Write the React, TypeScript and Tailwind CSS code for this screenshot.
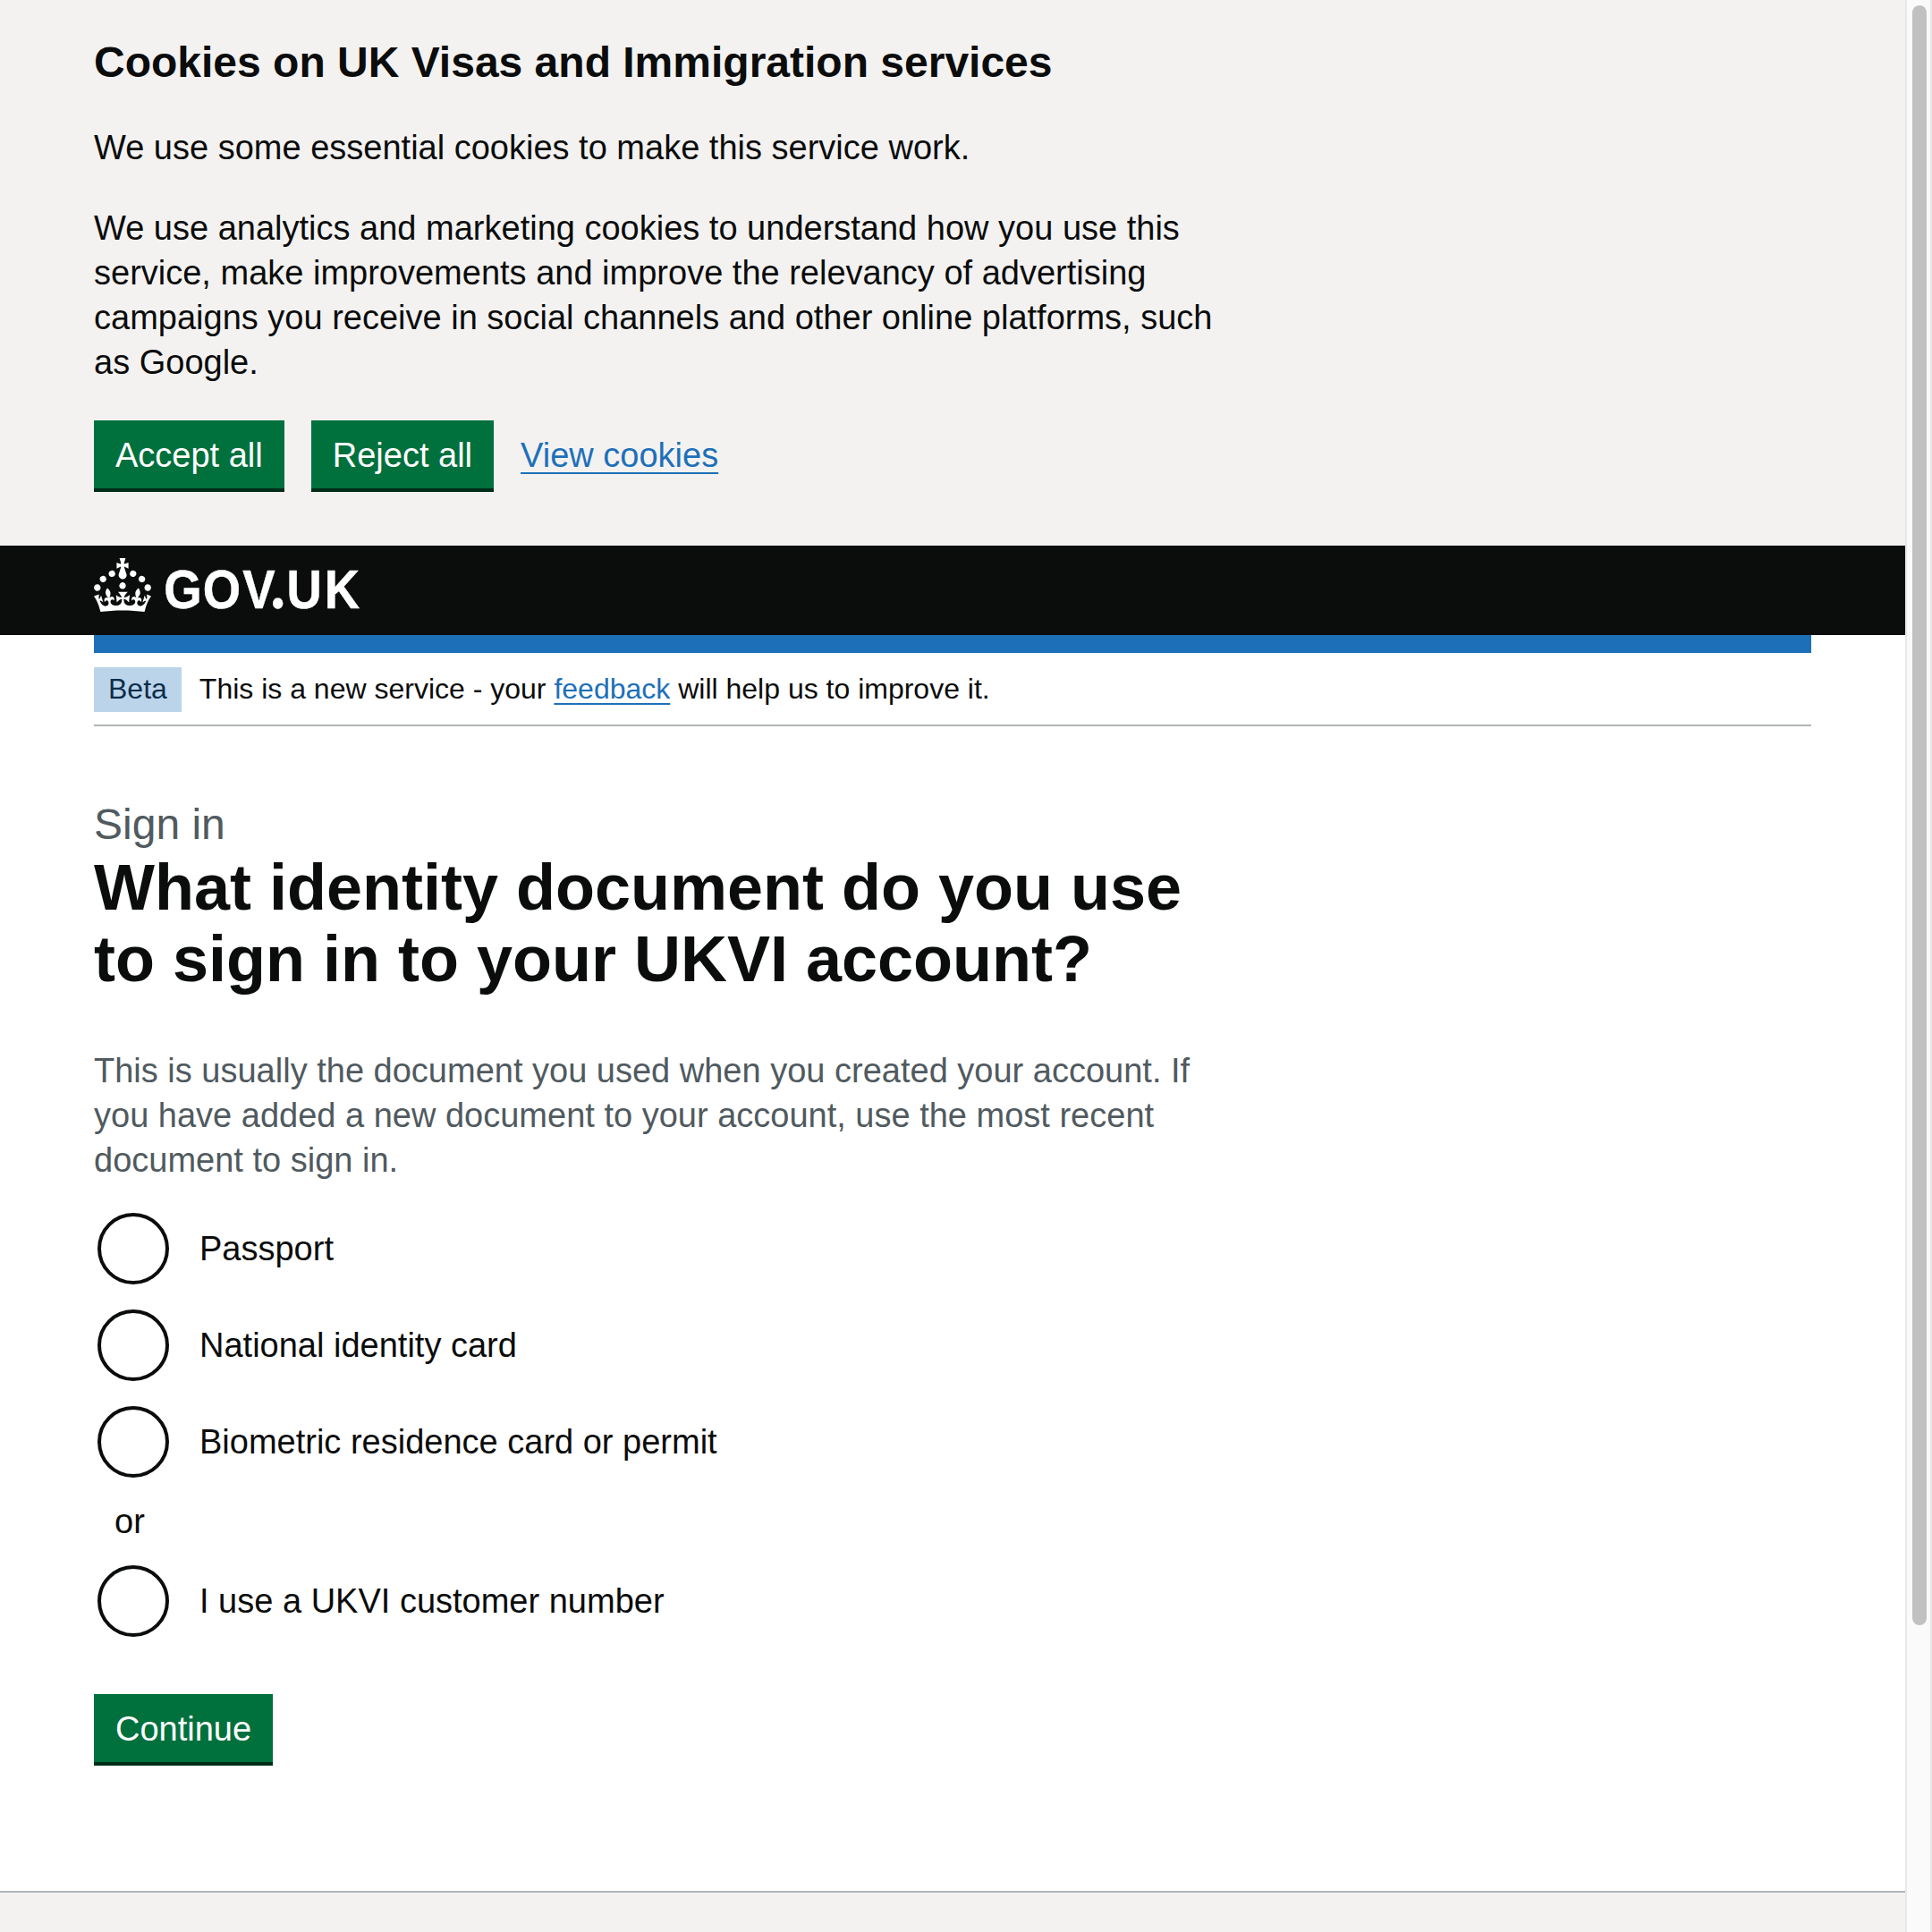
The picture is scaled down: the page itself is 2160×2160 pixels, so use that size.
import React from "react";

const CROWN =
  "M22.6 10.4c-1 .4-2-.1-2.4-1-.4-.9.1-2 1-2.4.9-.4 2 .1 2.4 1s-.1 2-1 2.4m-5.9 6.7c-.9.4-2-.1-2.4-1-.4-.9.1-2 1-2.4.9-.4 2 .1 2.4 1s-.1 2-1 2.4m10.8-3.7c-1 .4-2-.1-2.4-1-.4-.9.1-2 1-2.4.9-.4 2 .1 2.4 1s0 2-1 2.4m3.3 4.8c-1 .4-2-.1-2.4-1-.4-.9.1-2 1-2.4.9-.4 2 .1 2.4 1s-.1 2-1 2.4M17 4.7l2.3 1.2V2.5l-2.3.7-.2-.2.9-3h-3.4l.9 3-.2.2c-.1.1-2.3-.7-2.3-.7v3.4L15 4.7c.1.1.1.2.2.2l-1.3 4c-.1.2-.1.4-.1.6 0 1.1.8 2 1.9 2.2h.7c1-.2 1.9-1.1 1.9-2.1 0-.2 0-.4-.1-.6l-1.3-4c-.1-.2 0-.2.1-.3m-7.6 5.7c.9.4 2-.1 2.4-1 .4-.9-.1-2-1-2.4-.9-.4-2 .1-2.4 1s0 2 1 2.4m-5 3c.9.4 2-.1 2.4-1 .4-.9-.1-2-1-2.4-.9-.4-2 .1-2.4 1s.1 2 1 2.4m-3.2 4.8c.9.4 2-.1 2.4-1 .4-.9-.1-2-1-2.4-.9-.4-2 .1-2.4 1s0 2 1 2.4m14.8 11c4.4 0 8.6.3 12.3.8 1.1-4.5 2.4-7 3.7-8.8l-2.5-.9c.2 1.3.3 1.9 0 2.7-.4-.4-.8-1.1-1.1-2.3l-1.2 4c.7-.5 1.3-.8 2-.9-1.1 2.5-2.6 3.1-3.5 3-1.1-.2-1.7-1.2-1.5-2.1.3-1.2 1.5-1.5 2.1-.1 1.1-2.3-.8-3-2-2.3 1.9-1.9 2.1-3.5.6-5.6-2.1 1.6-2.1 3.2-1.2 5.5-1.2-1.4-3.2-.6-2.5 1.6.9-1.4 2.1-.5 1.9.8-.2 1.1-1.7 2.1-3.5 1.9-2.7-.2-2.9-2.1-2.9-3.6.7-.1 1.9.5 2.9 1.9l.4-4.3c-1.1 1.1-2.1 1.4-3.2 1.4.4-1.2 2.1-3 2.1-3h-5.4s1.7 1.9 2.1 3c-1.1 0-2.1-.2-3.2-1.4l.4 4.3c1-1.4 2.2-2 2.9-1.9-.1 1.5-.2 3.4-2.9 3.6-1.9.2-3.4-.8-3.5-1.9-.2-1.3 1-2.2 1.9-.8.7-2.3-1.2-3-2.5-1.6.9-2.2.9-3.9-1.2-5.5-1.5 2-1.3 3.7.6 5.6-1.2-.7-3.1 0-2 2.3.6-1.4 1.8-1.1 2.1.1.2.9-.3 1.9-1.5 2.1-.9.2-2.4-.5-3.5-3 .6 0 1.2.3 2 .9l-1.2-4c-.3 1.1-.7 1.9-1.1 2.3-.3-.8-.2-1.4 0-2.7l-2.9.9C1.3 23 2.6 25.5 3.7 30c3.7-.5 7.9-.8 12.3-.8";

function Logo() {
  return (
    <svg viewBox="0 0 320 86" className="h-[86px] w-[320px] fill-white" aria-label="GOV.UK">
      <path d={CROWN} transform="scale(2)" />
      <text
        transform="scale(.9 1)"
        x="87 135.4 184.6 219.6 239.4 286.4"
        y="55.8"
        className="stroke-white stroke-[0.5] font-['Liberation_Sans',sans-serif] text-[60.5px] font-bold"
      >
        GOV<tspan className="font-[Lato,sans-serif] text-[74px] font-black">.</tspan>UK
      </text>
    </svg>
  );
}

function Button({ children }: { children: React.ReactNode }) {
  return (
    <button className="mb-1 h-[76px] bg-[#00703c] px-6 pt-px text-[38px] leading-[38px] text-white shadow-[0_4px_0_#002d18]">
      {children}
    </button>
  );
}

function Radio({ label }: { label: string }) {
  return (
    <label className="flex h-20 items-center">
      <span className="ml-1 mr-[34px] size-20 rounded-full border-4 border-[#0b0c0c]" />
      {label}
    </label>
  );
}

const link = "text-[#1d70b8] underline decoration-2";

export default function App() {
  return (
    <div className="flex h-[2160px] w-[2160px] overflow-hidden bg-white font-['Liberation_Sans',Arial,sans-serif] text-[38px] leading-[50px] text-[#0b0c0c]">
      <div className="flex w-[2130px] flex-col">
        <section className="h-[610px] bg-[#f3f2f1] px-[105px] pt-10">
          <div className="flex w-[1260px] flex-col gap-10">
            <h2 className="text-5xl leading-[60px] font-bold">Cookies on UK Visas and Immigration services</h2>
            <p>We use some essential cookies to make this service work.</p>
            <p>
              We use analytics and marketing cookies to understand how you use this service, make improvements and
              improve the relevancy of advertising campaigns you receive in social channels and other online
              platforms, such as Google.
            </p>
            <div className="flex gap-[30px]">
              <Button>Accept all</Button>
              <Button>Reject all</Button>
              <a className={`${link} pt-3.5 underline-offset-[6px]`}>View cookies</a>
            </div>
          </div>
        </section>

        <header className="h-[100px] bg-[#0b0c0c] px-[105px] pt-3.5">
          <Logo />
        </header>

        <div className="mx-[105px] border-t-[20px] border-[#1d70b8]">
          <div className="flex h-[82px] items-start gap-5 border-b-2 border-[#b1b4b6] pt-4 text-[32px] leading-10">
            <strong className="bg-[#bbd4ea] px-4 pt-1 pb-1.5 font-normal text-[#0c2d4a]">Beta</strong>
            <span className="pt-1">
              This is a new service - your <a className={`${link} underline-offset-[5px]`}>feedback</a> will help us
              to improve it.
            </span>
          </div>
        </div>

        <main className="flex-1 px-[105px] pt-20">
          <div className="w-[1260px]">
            <span className="block text-5xl leading-[60px] text-[#505a5f]">Sign in</span>
            <h1 className="text-7xl leading-20 font-bold">
              What identity document do you use to sign in to your UKVI account?
            </h1>
            <p className="mt-[60px] text-[#505a5f]">
              This is usually the document you used when you created your account. If you have added a new document
              to your account, use the most recent document to sign in.
            </p>
            <div className="mt-[34px] flex flex-col gap-7">
              <Radio label="Passport" />
              <Radio label="National identity card" />
              <Radio label="Biometric residence card or permit" />
              <div className="-my-1 w-20 text-center">or</div>
              <Radio label="I use a UKVI customer number" />
            </div>
            <div className="mt-16">
              <Button>Continue</Button>
            </div>
          </div>
        </main>

        <footer className="h-[46px] border-t-2 border-[#b1b4b6] bg-[#f3f2f1]" />
      </div>

      <div className="w-[30px] border-x-2 border-[#e8e8e8] bg-[#fafafa] pt-1.5 pl-1.5">
        <div className="h-[1811px] w-4 rounded-full bg-[#c1c1c1]" />
      </div>
    </div>
  );
}
